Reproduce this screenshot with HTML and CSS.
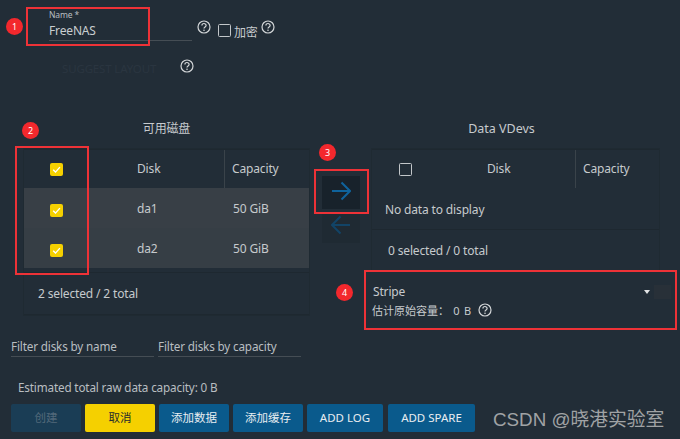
FILE: index.html
```html
<!DOCTYPE html>
<html lang="zh">
<head>
<meta charset="utf-8">
<title>Pool Manager</title>
<link rel="stylesheet" href="styles.css">
</head>
<body>
<svg class="defs" width="0" height="0" aria-hidden="true">
  <symbol id="help" viewBox="0 0 14 14">
    <circle cx="7" cy="7" r="6" fill="none" stroke="currentColor" stroke-width="1.2"/>
    <path d="M4.9 5.5a2.1 2 0 0 1 4.2 0c0 1.4-2.1 1.500-2.1 3" fill="none" stroke="currentColor" stroke-width="1.2"/>
    <circle cx="7" cy="10.3" r=".8" fill="currentColor"/>
  </symbol>
  <symbol id="tick" viewBox="0 0 13 13">
    <path d="M3.2 6.8l2.3 2.3 4.4-5" fill="none" stroke="#fff" stroke-width="1.4"/>
  </symbol>
</svg>
<main class="page">
  <section class="name-row">
    <div class="name-field">
      <span class="name-label">Name *</span>
      <span class="name-value">FreeNAS</span>
    </div>
    <svg class="help help-name"><use href="#help"/></svg>
    <span class="checkbox"></span>
    <span class="encrypt">加密</span>
    <svg class="help help-encrypt"><use href="#help"/></svg>
  </section>
  <section class="suggest-row">
    <span class="suggest">SUGGEST LAYOUT</span>
    <svg class="help"><use href="#help"/></svg>
  </section>
  <section class="builder">
    <div class="column column-left">
      <h2 class="title">可用磁盘</h2>
      <div class="table">
        <div class="row head">
          <div class="cell cell-check"><span class="checkbox checked"><svg><use href="#tick"/></svg></span></div>
          <div class="cell cell-disk">Disk</div>
          <div class="cell cell-cap divided">Capacity</div>
        </div>
        <div class="row selected">
          <div class="cell cell-check"><span class="checkbox checked"><svg><use href="#tick"/></svg></span></div>
          <div class="cell cell-disk">da1</div>
          <div class="cell cell-cap">50 GiB</div>
        </div>
        <div class="row selected">
          <div class="cell cell-check"><span class="checkbox checked"><svg><use href="#tick"/></svg></span></div>
          <div class="cell cell-disk">da2</div>
          <div class="cell cell-cap">50 GiB</div>
        </div>
        <div class="table-foot foot-left">2 selected / 2 total</div>
      </div>
    </div>
    <div class="arrows">
      <div class="arrow arrow-on">
        <svg width="20" height="20" viewBox="0 0 20 20"><path d="M1 10h18M10.500 1.500l8.500 8.500-8.500 8.500" fill="none" stroke="#0f639c" stroke-width="2"/></svg>
      </div>
      <div class="arrow arrow-off">
        <svg width="20" height="20" viewBox="0 0 20 20"><path d="M19 10H1M9.500 1.500L1 10l8.500 8.500" fill="none" stroke="#124467" stroke-width="2"/></svg>
      </div>
    </div>
    <div class="column column-right">
      <h2 class="title">Data VDevs</h2>
      <div class="table">
        <div class="row head">
          <div class="cell cell-check"><span class="checkbox"></span></div>
          <div class="cell cell-disk">Disk</div>
          <div class="cell cell-cap divided">Capacity</div>
        </div>
        <div class="row row-empty">No data to display</div>
        <div class="table-foot foot-right">0 selected / 0 total</div>
      </div>
      <div class="vdev-type">
        <div class="type-line"><span>Stripe</span><span class="caret"></span><span class="caret-box"></span></div>
        <div class="type-cap">估计原始容量： 0 B <svg class="help"><use href="#help"/></svg></div>
      </div>
    </div>
  </section>
  <section class="filters">
    <div class="filter">Filter disks by name</div>
    <div class="filter">Filter disks by capacity</div>
  </section>
  <p class="estimate">Estimated total raw data capacity: 0 B</p>
  <section class="actions">
    <span class="btn btn-disabled">创建</span>
    <span class="btn btn-yellow">取消</span>
    <span class="btn">添加数据</span>
    <span class="btn">添加缓存</span>
    <span class="btn btn-log">ADD LOG</span>
    <span class="btn btn-spare">ADD SPARE</span>
    <span class="watermark">CSDN @晓港实验室</span>
  </section>
</main>
<div class="mark mark-1"></div>
<div class="mark mark-2"></div>
<div class="mark mark-3"></div>
<div class="mark mark-4"></div>
<span class="dot dot-1">1</span>
<span class="dot dot-2">2</span>
<span class="dot dot-3">3</span>
<span class="dot dot-4">4</span>
</body>
</html>
```
FILE: styles.css
```css
* { box-sizing: border-box; }
html, body { margin: 0; height: 100%; }
body {
  position: relative;
  width: 680px;
  height: 439px;
  overflow: hidden;
  background: #222d37;
  color: #c6cacd;
  font: 12px/16px "Noto Sans", "Noto Sans CJK SC", sans-serif;
  letter-spacing: -.15px;
}
.defs { position: absolute; }
.page { display: flex; flex-direction: column; height: 439px; }

.name-row { display: flex; align-items: flex-start; height: 57px; padding: 10px 0 0 49px; }
.name-field { width: 143px; height: 31px; border-bottom: 1px solid #454d54; display: flex; flex-direction: column; }
.name-label { font-size: 8.5px; line-height: 10px; color: #b9bec1; }
.name-value { font-size: 12px; line-height: 18px; margin-top: 2px; color: #c9cdd0; }
.help { width: 14px; height: 14px; color: #d3d6d8; flex: none; }
.help-name { margin: 10px 7px 0 5px; }
.checkbox { display: inline-flex; width: 13px; height: 13px; border: 1.5px solid #c3c7ca; border-radius: 1.5px; flex: none; }
.name-row > .checkbox { margin-top: 14px; }
.encrypt { margin: 15px 3px 0 3px; font-size: 12px; line-height: 16px; }
.help-encrypt { margin-top: 10px; }

.suggest-row { display: flex; align-items: center; height: 18px; padding-left: 62px; }
.suggest { width: 118px; margin-top: 6px; font-size: 11.5px; color: #2a3540; white-space: nowrap; }

.builder { display: flex; height: 218px; margin-top: 44px; padding-left: 24px; }
.column { display: flex; flex-direction: column; flex: none; }
.column-left { width: 285px; }
.column-right { width: 287px; }
.title { margin: 0; height: 30px; font-size: 12px; line-height: 20px; font-weight: 400; text-align: center; color: #c6cacd; }
.column-right .title { padding-right: 28px; font-size: 12.5px; letter-spacing: 0; }

.table { background: #222d37; box-shadow: 0 0 0 1px #1f2a32; }
.row { display: flex; align-items: center; height: 40px; }
.head { height: 39px; border-top: 1px solid #1e2830; }
.selected { background: #383f46; }
.selected + .selected { background: #363e45; }
.cell { display: flex; align-items: center; height: 100%; }
.cell-check { width: 64px; justify-content: center; }
.cell-disk { width: 136px; padding-left: 49px; }
.cell-cap { flex: 1; padding-left: 9px; }
.column-right .cell-check { width: 66px; }
.column-right .cell-disk { width: 137px; }
.column-right .cell-cap { padding-left: 7px; }
.divided { border-left: 1px solid #3a434a; }
.head .divided { padding-left: 7px; }
.selected .cell { padding-top: 2px; }
.selected .cell-check { padding-top: 4px; }
.checked { background: #f5d000; border: 0; border-radius: 2px; }
.checked svg { width: 13px; height: 13px; }
.row-empty { padding: 2px 0 0 13px; height: 42px; border-bottom: 1px solid #1e2830; }
.table-foot { display: flex; align-items: center; }
.foot-left { height: 43px; margin-top: 4px; padding-left: 14px; border-top: 1px solid #1e2830; border-bottom: 1px solid #1e2830; }
.foot-right { height: 41px; padding-left: 16px; }

.arrows { width: 63px; flex: none; display: flex; flex-direction: column; gap: 4px; padding: 57px 0 0 13px; }
.arrow { width: 38px; display: flex; align-items: center; justify-content: center; }
.arrow-on { height: 33px; padding-bottom: 4px; background: #18222b; }
.arrow-off { height: 30px; padding-bottom: 6px; background: #1f2a33; }

.vdev-type { padding-top: 12px; }
.type-line { display: flex; align-items: center; height: 18px; line-height: 18px; padding-left: 1px; }
.caret { margin-left: auto; width: 0; height: 0; border: 3.5px solid transparent; border-top: 4px solid #e2e4e5; border-bottom: 0; }
.caret-box { width: 17px; height: 14px; margin: 0 -12px 0 4px; background: #283038; }
.type-cap { display: flex; align-items: center; height: 18px; white-space: pre; margin-top: 1px; font-size: 11px; letter-spacing: 0; word-spacing: 1.5px; }
.type-cap .help { margin-left: 2px; margin-bottom: 3px; }

.filters { display: flex; gap: 4px; padding-left: 11px; }
.filter { width: 143px; height: 20px; font-size: 11.7px; line-height: 18px; border-bottom: 1px solid #454d54; color: #b9bec1; }

.estimate { margin: 22px 0 0 18px; height: 16px; font-size: 11.7px; line-height: 16px; color: #b9bec1; }

.actions { display: flex; align-items: flex-start; gap: 4px; padding: 9px 0 0 11px; }
.btn { display: flex; align-items: center; justify-content: center; width: 70px; height: 28px; border-radius: 2px; background: #0a5a8c; color: #e8edf1; font-size: 11.5px; letter-spacing: 0; }
.btn-disabled { background: #1a3d55; color: #52697a; }
.btn-yellow { background: #f5d000; color: #262b2e; }
.btn-log { width: 76px; }
.btn-spare { width: 87px; margin-left: 1px; }
.watermark { margin: 4px 0 0 14px; font: 18.8px/24px "Liberation Sans", "Noto Sans CJK SC", sans-serif; letter-spacing: 0; color: #a0a3a5; white-space: nowrap; }

.mark { position: absolute; border: 2px solid #ee3237; }
.mark-1 { left: 26px; top: 7px; width: 124px; height: 39px; }
.mark-2 { left: 15px; top: 146px; width: 74px; height: 129px; }
.mark-3 { left: 314px; top: 169px; width: 55px; height: 45px; }
.mark-4 { left: 364px; top: 270px; width: 313px; height: 60px; }
.dot { position: absolute; width: 17px; height: 17px; border-radius: 50%; background: #f3282d; color: #fff; font-size: 9px; line-height: 17px; text-align: center; }
.dot-1 { left: 6px; top: 18px; }
.dot-2 { left: 22px; top: 122px; }
.dot-3 { left: 319px; top: 144px; }
.dot-4 { left: 336px; top: 284px; }
```
